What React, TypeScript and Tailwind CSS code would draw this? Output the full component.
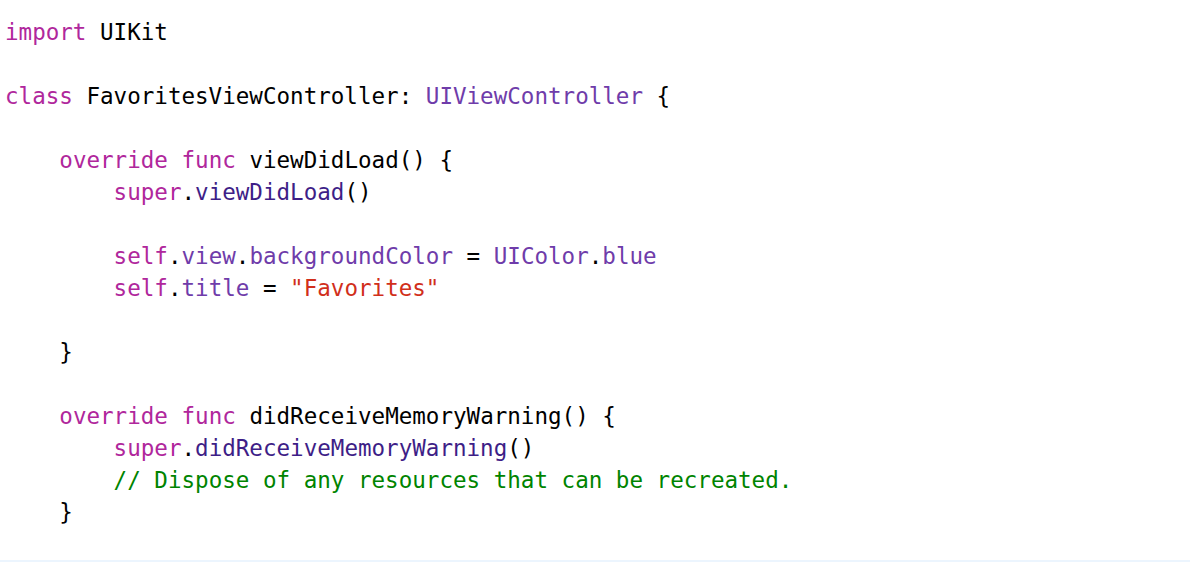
import React from "react";

const K = ({ children }: { children: React.ReactNode }) => <span className="text-[#B0279C]">{children}</span>;
const T = ({ children }: { children: React.ReactNode }) => <span className="text-[#6F3CAA]">{children}</span>;
const M = ({ children }: { children: React.ReactNode }) => <span className="text-[#3E1E87]">{children}</span>;
const S = ({ children }: { children: React.ReactNode }) => <span className="text-[#D12F1B]">{children}</span>;
const C = ({ children }: { children: React.ReactNode }) => <span className="text-[#008400]">{children}</span>;

const Line = ({ children }: { children?: React.ReactNode }) => (
  <div className="h-[32px] leading-[32px] whitespace-pre">{children ?? " "}</div>
);

export default function App() {
  return (
    <div className="w-[1190px] h-[562px] overflow-hidden bg-white text-black">
      <div className="pt-[16px] pl-[5px] text-[22.55px] font-['DejaVu_Sans_Mono',monospace]">
        <Line>
          <K>import</K> UIKit
        </Line>
        <Line />
        <Line>
          <K>class</K> FavoritesViewController: <T>UIViewController</T> {"{"}
        </Line>
        <Line />
        <Line>
          {"    "}<K>override</K> <K>func</K> viewDidLoad() {"{"}
        </Line>
        <Line>
          {"        "}<K>super</K>.<M>viewDidLoad</M>()
        </Line>
        <Line />
        <Line>
          {"        "}<K>self</K>.<T>view</T>.<T>backgroundColor</T> = <T>UIColor</T>.<T>blue</T>
        </Line>
        <Line>
          {"        "}<K>self</K>.<T>title</T> = <S>"Favorites"</S>
        </Line>
        <Line />
        <Line>{"    }"}</Line>
        <Line />
        <Line>
          {"    "}<K>override</K> <K>func</K> didReceiveMemoryWarning() {"{"}
        </Line>
        <Line>
          {"        "}<K>super</K>.<M>didReceiveMemoryWarning</M>()
        </Line>
        <Line>
          {"        "}<C>// Dispose of any resources that can be recreated.</C>
        </Line>
        <Line>{"    }"}</Line>
        <Line />
      </div>
      <div className="h-[32px] bg-[#ECF5FE]" />
    </div>
  );
}
